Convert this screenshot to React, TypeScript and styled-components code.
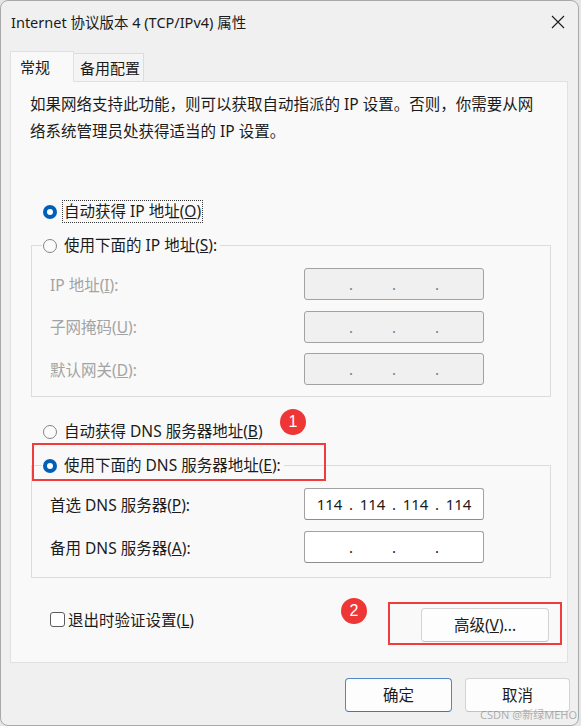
import React from 'react';
import styled, { createGlobalStyle } from 'styled-components';

const GlobalStyle = createGlobalStyle`
  html, body {
    margin: 0;
    padding: 0;
    background: #e6e6e6;
  }
  body {
    font-family: "Noto Sans", "Noto Sans CJK SC", sans-serif;
  }
  * {
    box-sizing: border-box;
  }
`;

const Stage = styled.div`
  position: relative;
  width: 581px;
  height: 726px;
  overflow: hidden;
  background: #e6e6e6;
`;

const Window = styled.div`
  width: 579px;
  height: 726px;
  display: flex;
  flex-direction: column;
  padding: 0 10px 0 9px;
  background: #f0f0f0;
  border: 1px solid #a9a9a9;
  border-radius: 8px;
  color: #1b1b1b;
  font-size: 15.5px;
`;

const TitleBar = styled.div`
  height: 41px;
  display: flex;
  align-items: center;
  justify-content: space-between;
  padding: 0 3px 0 1px;
`;

const Title = styled.div`
  font-size: 14.5px;
  line-height: 20px;
`;

const CloseButton = styled.div`
  width: 14px;
  height: 14px;
  display: flex;

  svg {
    width: 14px;
    height: 14px;
  }
`;

const TabStrip = styled.div`
  position: relative;
  z-index: 1;
  display: flex;
  align-items: flex-start;
  height: 31px;
  margin-top: 9px;
  margin-bottom: -1px;
`;

const Tab = styled.div<{ $active?: boolean }>`
  display: flex;
  align-items: center;
  font-size: 15px;
  line-height: 20px;
  ${(p) =>
    p.$active
      ? `
    height: 31px;
    width: 64px;
    padding-left: 9px;
    background: #f9f9f9;
    border: 1px solid #e1e1e1;
    border-bottom: none;
  `
      : `
    height: 28px;
    width: 70px;
    margin-top: 2px;
    padding-left: 6px;
    background: #f4f4f4;
    border: 1px solid #dcdcdc;
    border-left: none;
    border-bottom: none;
  `}
`;

const Panel = styled.div`
  flex: 0 0 582px;
  display: flex;
  flex-direction: column;
  padding: 9px 16px 20px 20px;
  background: #f9f9f9;
  border: 1px solid #e1e1e1;
`;

const Description = styled.p`
  margin: 0 0 0 -1px;
  line-height: 27px;
  white-space: nowrap;
`;

const RadioRow = styled.div<{ $mt: number }>`
  display: flex;
  align-items: center;
  height: 23px;
  margin: ${(p) => p.$mt}px 0 0 12px;
`;

const Radio = styled.span<{ $checked?: boolean }>`
  position: relative;
  flex: 0 0 14px;
  width: 14px;
  height: 14px;
  border-radius: 50%;
  ${(p) =>
    p.$checked
      ? `
    background: #005fb8;
    &::after {
      content: '';
      position: absolute;
      left: 4px;
      top: 4px;
      width: 6px;
      height: 6px;
      border-radius: 50%;
      background: #fff;
    }
  `
      : `
    background: #fbfbfb;
    border: 1px solid #858585;
  `}
`;

const OptionText = styled.span<{ $focused?: boolean }>`
  line-height: 21px;
  white-space: nowrap;
  ${(p) =>
    p.$focused
      ? `
    margin-left: 5px;
    padding: 0 1px;
    border: 1px dotted #3a3a3a;
  `
      : `
    margin-left: 7px;
  `}
`;

const Group = styled.fieldset<{ $mt: number; $pb: number }>`
  margin: ${(p) => p.$mt}px 0 0 0;
  padding: 11px 16px ${(p) => p.$pb}px 18px;
  min-width: 0;
  border: 1px solid #dcdcdc;
`;

const GroupLegend = styled.legend`
  margin-left: -8px;
  padding: 0 3px 0 1px;
`;

const LegendInner = styled.span`
  display: flex;
  align-items: center;
  height: 23px;
`;

const FieldGrid = styled.div<{ $gap: number }>`
  display: grid;
  grid-template-columns: 254px 180px;
  row-gap: ${(p) => p.$gap}px;
  align-items: center;
`;

const FieldLabel = styled.span<{ $disabled?: boolean }>`
  color: ${(p) => (p.$disabled ? '#a3a3a3' : '#1b1b1b')};
  white-space: nowrap;
`;

const IpBox = styled.div<{ $disabled?: boolean }>`
  height: 32px;
  display: grid;
  grid-template-columns: 1fr auto 1fr auto 1fr auto 1fr;
  align-items: center;
  justify-items: center;
  padding: 0 6px;
  background: ${(p) => (p.$disabled ? '#f0f0f0' : '#ffffff')};
  border: 1px solid #a2a2a2;
  border-bottom-color: ${(p) => (p.$disabled ? '#a2a2a2' : '#8c8c8c')};
  border-radius: 3px;
  font-size: 15px;
  line-height: 20px;
`;

const IpDot = styled.span<{ $disabled?: boolean }>`
  width: 6px;
  text-align: center;
  color: ${(p) => (p.$disabled ? '#6e7f92' : '#1b1b1b')};
`;

const BottomRow = styled.div`
  display: flex;
  align-items: flex-start;
  justify-content: space-between;
  margin-top: 30px;
`;

const CheckRow = styled.div`
  display: flex;
  align-items: center;
  height: 23px;
  margin-left: 19px;
`;

const CheckBox = styled.span`
  flex: 0 0 15px;
  width: 15px;
  height: 15px;
  background: #fff;
  border: 1px solid #5c5c5c;
  border-radius: 3px;
`;

const CheckText = styled.span`
  margin-left: 3px;
  white-space: nowrap;
`;

const Button = styled.button<{ $w: number; $primary?: boolean }>`
  width: ${(p) => p.$w}px;
  height: 34px;
  padding: 0;
  background: #fdfdfd;
  border: 1px solid ${(p) => (p.$primary ? '#4f86c6' : '#d3d3d3')};
  border-bottom-color: ${(p) => (p.$primary ? '#3f77ba' : '#c2c2c2')};
  border-radius: 4px;
  color: #1b1b1b;
  font-family: "Noto Sans", "Noto Sans CJK SC", sans-serif;
  font-size: 15.5px;
  line-height: 20px;
`;

const AdvancedButton = styled(Button)`
  margin-right: 2px;
`;

const Footer = styled.div`
  display: flex;
  justify-content: flex-end;
  gap: 13px;
  padding-top: 15px;
  margin-right: -2px;
`;

/* annotation overlays drawn on top of the screenshot */
const RedBox = styled.div<{ $x: number; $y: number; $w: number; $h: number }>`
  position: absolute;
  left: ${(p) => p.$x}px;
  top: ${(p) => p.$y}px;
  width: ${(p) => p.$w}px;
  height: ${(p) => p.$h}px;
  border: 2px solid #f03c3c;
`;

const Badge = styled.div<{ $x: number; $y: number }>`
  position: absolute;
  left: ${(p) => p.$x}px;
  top: ${(p) => p.$y}px;
  width: 26px;
  height: 26px;
  display: flex;
  align-items: center;
  justify-content: center;
  border-radius: 50%;
  background: #ee3636;
  color: #fff;
  font-family: "Liberation Sans", Arial, sans-serif;
  font-size: 16px;
`;

const Watermark = styled.div`
  position: absolute;
  right: 4px;
  bottom: 4px;
  color: rgba(130, 130, 130, 0.6);
  font-size: 11px;
  line-height: 14px;
`;

const dnsRows = [
  { label: '首选 DNS 服务器', key: 'P', value: ['114', '114', '114', '114'] },
  { label: '备用 DNS 服务器', key: 'A', value: ['', '', '', ''] },
];

const ipRows = [
  { label: 'IP 地址', key: 'I' },
  { label: '子网掩码', key: 'U' },
  { label: '默认网关', key: 'D' },
];

const IpField: React.FC<{ parts: string[]; disabled?: boolean }> = ({ parts, disabled }) => (
  <IpBox $disabled={disabled}>
    {parts.map((part, i) => (
      <React.Fragment key={i}>
        {i > 0 && <IpDot $disabled={disabled}>.</IpDot>}
        <span>{part}</span>
      </React.Fragment>
    ))}
  </IpBox>
);

export default function App() {
  return (
    <>
      <GlobalStyle />
      <Stage>
        <Window>
          <TitleBar>
            <Title>Internet 协议版本 4 (TCP/IPv4) 属性</Title>
            <CloseButton>
              <svg viewBox="0 0 14 14">
                <path d="M1 1L13 13M13 1L1 13" stroke="#1b1b1b" strokeWidth="1.1" />
              </svg>
            </CloseButton>
          </TitleBar>

          <TabStrip>
            <Tab $active>常规</Tab>
            <Tab>备用配置</Tab>
          </TabStrip>

          <Panel>
            <Description>
              如果网络支持此功能，则可以获取自动指派的 IP 设置。否则，你需要从网
              <br />
              络系统管理员处获得适当的 IP 设置。
            </Description>

            <RadioRow $mt={55}>
              <Radio $checked />
              <OptionText $focused>
                自动获得 IP 地址(<u>O</u>)
              </OptionText>
            </RadioRow>

            <Group $mt={11} $pb={11}>
              <GroupLegend>
                <LegendInner>
                  <Radio />
                  <OptionText>
                    使用下面的 IP 地址(<u>S</u>):
                  </OptionText>
                </LegendInner>
              </GroupLegend>
              <FieldGrid $gap={10.5}>
                {ipRows.map((row) => (
                  <React.Fragment key={row.key}>
                    <FieldLabel $disabled>
                      {row.label}(<u>{row.key}</u>):
                    </FieldLabel>
                    <IpField parts={['', '', '', '']} disabled />
                  </React.Fragment>
                ))}
              </FieldGrid>
            </Group>

            <RadioRow $mt={23}>
              <Radio />
              <OptionText>
                自动获得 DNS 服务器地址(<u>B</u>)
              </OptionText>
            </RadioRow>

            <Group $mt={11} $pb={14}>
              <GroupLegend>
                <LegendInner>
                  <Radio $checked />
                  <OptionText>
                    使用下面的 DNS 服务器地址(<u>E</u>):
                  </OptionText>
                </LegendInner>
              </GroupLegend>
              <FieldGrid $gap={11}>
                {dnsRows.map((row) => (
                  <React.Fragment key={row.key}>
                    <FieldLabel>
                      {row.label}(<u>{row.key}</u>):
                    </FieldLabel>
                    <IpField parts={row.value} />
                  </React.Fragment>
                ))}
              </FieldGrid>
            </Group>

            <BottomRow>
              <CheckRow>
                <CheckBox />
                <CheckText>
                  退出时验证设置(<u>L</u>)
                </CheckText>
              </CheckRow>
              <AdvancedButton $w={128}>
                高级(<u>V</u>)...
              </AdvancedButton>
            </BottomRow>
          </Panel>

          <Footer>
            <Button $w={107} $primary>
              确定
            </Button>
            <Button $w={105}>取消</Button>
          </Footer>
        </Window>

        <RedBox $x={32} $y={443} $w={294} $h={38} />
        <Badge $x={280} $y={409}>1</Badge>
        <RedBox $x={388} $y={602} $w={174} $h={43} />
        <Badge $x={341} $y={598}>2</Badge>
        <Watermark>CSDN @新绿MEHO</Watermark>
      </Stage>
    </>
  );
}
